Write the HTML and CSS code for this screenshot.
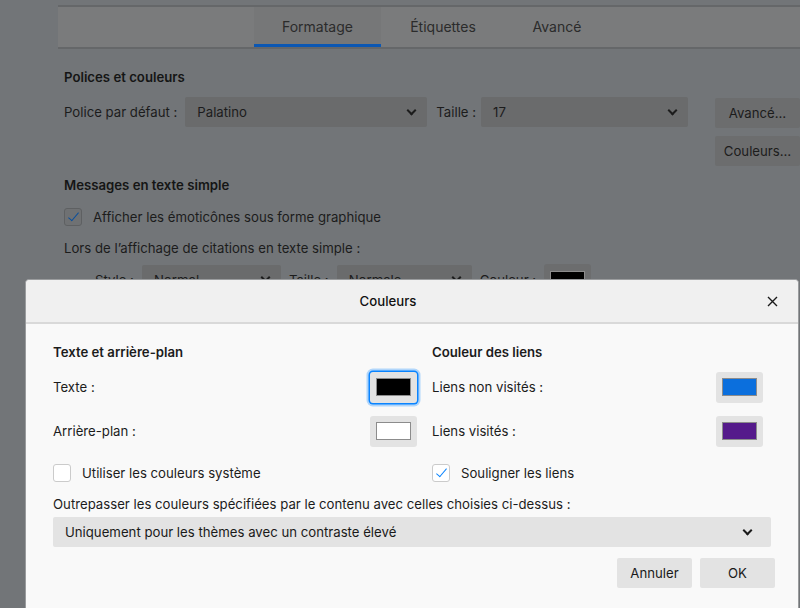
FILE: index.html
```html
<!DOCTYPE html>
<html lang="fr">
<head>
    <meta charset="UTF-8">
    <title>Couleurs</title>
    <link rel="stylesheet" href="styles.css">
</head>
<body>
    <div class="page">
        <nav class="tabs">
            <div class="tab-spacer"></div>
            <div class="tab selected">Formatage</div>
            <div class="tab labels">Étiquettes</div>
            <div class="tab advanced">Avancé</div>
        </nav>

        <section class="prefs">
            <h3>Polices et couleurs</h3>
            <div class="font-row">
                <div class="font-fields">
                    <span class="label">Police par défaut :</span>
                    <div class="select font-select">Palatino <span class="chev"></span></div>
                    <span class="label">Taille :</span>
                    <div class="select size-select">17 <span class="chev"></span></div>
                </div>
                <div class="side-buttons">
                    <button class="btn">Avancé…</button>
                    <button class="btn">Couleurs…</button>
                </div>
            </div>

            <h3 class="plain-title">Messages en texte simple</h3>
            <label class="check-row">
                <span class="checkbox checked"></span>
                Afficher les émoticônes sous forme graphique
            </label>
            <p class="quote-note">Lors de l’affichage de citations en texte simple :</p>
            <div class="quote-row">
                <span class="label">Style :</span>
                <div class="select style-select">Normal <span class="chev"></span></div>
                <span class="label">Taille :</span>
                <div class="select qsize-select">Normale <span class="chev"></span></div>
                <span class="label">Couleur :</span>
                <div class="swatch-btn dim"><span class="swatch black"></span></div>
            </div>
        </section>
    </div>

    <div class="dialog">
        <header class="dialog-head">
            <div class="dialog-title">Couleurs</div>
            <button class="close" aria-label="Fermer">
                <svg width="11" height="11" viewBox="0 0 11 11"><path d="M1 1L10 10M10 1L1 10" stroke="#1a1a1a" stroke-width="1.4" fill="none"/></svg>
            </button>
        </header>
        <div class="dialog-body">
            <div class="columns">
                <div class="col">
                    <h4>Texte et arrière-plan</h4>
                    <div class="color-row">
                        <span>Texte :</span>
                        <div class="swatch-btn focused"><span class="swatch black"></span></div>
                    </div>
                    <div class="color-row">
                        <span>Arrière-plan :</span>
                        <div class="swatch-btn"><span class="swatch white"></span></div>
                    </div>
                    <label class="check-row">
                        <span class="checkbox"></span>
                        Utiliser les couleurs système
                    </label>
                </div>
                <div class="col right">
                    <h4>Couleur des liens</h4>
                    <div class="color-row">
                        <span>Liens non visités :</span>
                        <div class="swatch-btn"><span class="swatch blue"></span></div>
                    </div>
                    <div class="color-row">
                        <span>Liens visités :</span>
                        <div class="swatch-btn"><span class="swatch purple"></span></div>
                    </div>
                    <label class="check-row">
                        <span class="checkbox checked"></span>
                        Souligner les liens
                    </label>
                </div>
            </div>
            <p class="override-note">Outrepasser les couleurs spécifiées par le contenu avec celles choisies ci-dessus :</p>
            <div class="select wide-select">Uniquement pour les thèmes avec un contraste élevé <span class="chev"></span></div>
            <div class="dialog-actions">
                <button class="btn light">Annuler</button>
                <button class="btn light">OK</button>
            </div>
        </div>
    </div>
</body>
</html>
```

FILE: styles.css
```css
body {
    margin: 0;
    font-family: 'Inter', 'Liberation Sans', sans-serif;
    font-size: 13.2px;
    color: #1c1c1c;
    background-color: #727578; /* page dimmed behind the dialog */
    height: 608px;
    overflow: hidden;
}

.page {
    padding-top: 5px;
}

/* tab strip */
.tabs {
    display: flex;
    margin-left: 58px;
    height: 40px;
    background-color: #7a7b7c;
    border-top: 2px solid #656769;
    border-bottom: 2px solid #656769;
}

.tab-spacer {
    width: 196px;
}

.tab {
    display: flex;
    align-items: center;
    justify-content: center;
    color: #2b2b2b;
    font-size: 14px;
    box-sizing: border-box;
    padding-bottom: 2px;
}

.tab.selected {
    width: 127px;
    background-color: #767778;
    border-bottom: 3px solid #0b57b3;
    padding: 1px 0 0;
}

.tab.labels {
    width: 124px;
}

.tab.advanced {
    width: 104px;
}

/* preferences behind */
.prefs {
    padding: 0 0 0 64px;
}

.prefs h3 {
    margin: 20px 0 0;
    font-size: 13.2px;
    font-weight: 600;
    line-height: 16px;
    color: #151515;
}

.label {
    color: #1c1c1c;
}

.font-row {
    display: flex;
    justify-content: space-between;
    margin-top: 12px;
}

.font-fields {
    display: flex;
    align-items: center;
    height: 30px;
}

.select {
    display: flex;
    align-items: center;
    justify-content: space-between;
    box-sizing: border-box;
    height: 30px;
    padding: 0 12px 0 12px;
    border-radius: 2px;
    background-color: #6a6b6c;
    color: #1c1c1c;
}

.chev {
    width: 5px;
    height: 5px;
    border-right: 2px solid #1c1c1c;
    border-bottom: 2px solid #1c1c1c;
    transform: rotate(45deg);
    margin-top: -4px;
}

.font-select {
    width: 242px;
    margin: 0 9px 0 8px;
}

.size-select {
    width: 207px;
    margin-left: 5px;
}

.side-buttons {
    display: flex;
    flex-direction: column;
    gap: 8px;
    width: 85px;
    margin-top: 1px;
}

.btn {
    font-family: inherit;
    font-size: 13.2px;
    height: 30px;
    border: none;
    border-radius: 2px;
    background-color: #6c6d6e;
    color: #1c1c1c;
    padding: 0;
    cursor: pointer;
}

.prefs h3.plain-title {
    margin-top: 11px;
}

.check-row {
    display: flex;
    align-items: center;
    gap: 11px;
}

.prefs .check-row {
    margin-top: 15px;
}

.checkbox {
    width: 16px;
    height: 16px;
    border: 1px solid #5e6062;
    border-radius: 3px;
    background-color: #6f7173;
    position: relative;
    flex: none;
}

.checkbox.checked::after {
    content: "";
    position: absolute;
    left: 6px;
    top: 1px;
    width: 4px;
    height: 10px;
    border-right: 1.5px solid #0a4f9c;
    border-bottom: 1.5px solid #0a4f9c;
    transform: rotate(40deg);
}

.quote-note {
    margin: 14px 0 0;
    line-height: 16px;
}

.quote-row {
    display: flex;
    align-items: center;
    margin: 8px 0 0 31px;
}

.style-select {
    width: 139px;
    margin: 0 8px;
}

.qsize-select {
    width: 135px;
    margin: 0 8px 0 8px;
}

.swatch-btn {
    width: 47px;
    height: 31px;
    box-sizing: border-box;
    display: flex;
    align-items: center;
    justify-content: center;
    border-radius: 3px;
    background-color: #e3e3e3;
}

.swatch-btn.dim {
    background-color: #6c6d6e;
    margin-left: 8px;
}

.swatch {
    width: 35px;
    height: 18px;
    box-sizing: border-box;
    border: 1px solid #8c8c8c;
}

.swatch.black { background-color: #000; }
.swatch.white { background-color: #fff; }
.swatch.blue { background-color: #0b6fdd; }
.swatch.purple { background-color: #551a8b; }

/* dialog */
.dialog {
    position: absolute;
    left: 25px;
    top: 279px;
    width: 774px;
    height: 340px;
    background-color: #f9f9f9;
    border: 1px solid #9a9c9e;
    border-radius: 4px 4px 0 0;
    box-sizing: border-box;
}

.dialog-head {
    display: flex;
    align-items: center;
    height: 42px;
    background-color: #f0f0f0;
    border-bottom: 2px solid #d9d9d9;
    border-radius: 4px 4px 0 0;
}

.dialog-title {
    flex: 1;
    text-align: center;
    font-size: 13.2px;
    font-weight: 500;
    color: #111;
    padding-left: 4px;
}

.close {
    width: 52px;
    height: 40px;
    border: none;
    background: none;
    display: flex;
    align-items: center;
    justify-content: center;
    padding: 0;
}

.dialog-body {
    padding: 20px 27px 0;
}

.columns {
    display: grid;
    grid-template-columns: 364px 1fr;
    column-gap: 15px;
}

.col.right {
    padding-right: 8px;
}

.col h4 {
    margin: 0;
    font-size: 13.2px;
    font-weight: 600;
    line-height: 16px;
}

.color-row {
    display: flex;
    align-items: center;
    justify-content: space-between;
    height: 32px;
}

.col h4 + .color-row {
    margin-top: 11px;
}

.color-row + .color-row {
    margin-top: 12px;
}

.col .check-row {
    margin-top: 17px;
}

.col .checkbox {
    background-color: #fff;
    border-color: #cbcbcb;
}

.col .checkbox.checked::after {
    border-color: #0a84ff;
}

.swatch-btn.focused {
    box-shadow: 0 0 0 1.5px #0a84ff, 0 0 0 3.5px rgba(10, 132, 255, 0.3);
}

.override-note {
    margin: 14px 0 0;
    line-height: 16px;
}

.wide-select {
    margin-top: 5px;
    height: 30px;
    background-color: #e3e3e3;
    padding-right: 20px;
    color: #1a1a1a;
}

.wide-select .chev {
    border-color: #1a1a1a;
}

.dialog-actions {
    display: flex;
    justify-content: flex-end;
    gap: 8px;
    margin: 11px -4px 0 0;
}

.btn.light {
    width: 75px;
    background-color: #e3e3e3;
    color: #1a1a1a;
}
```
